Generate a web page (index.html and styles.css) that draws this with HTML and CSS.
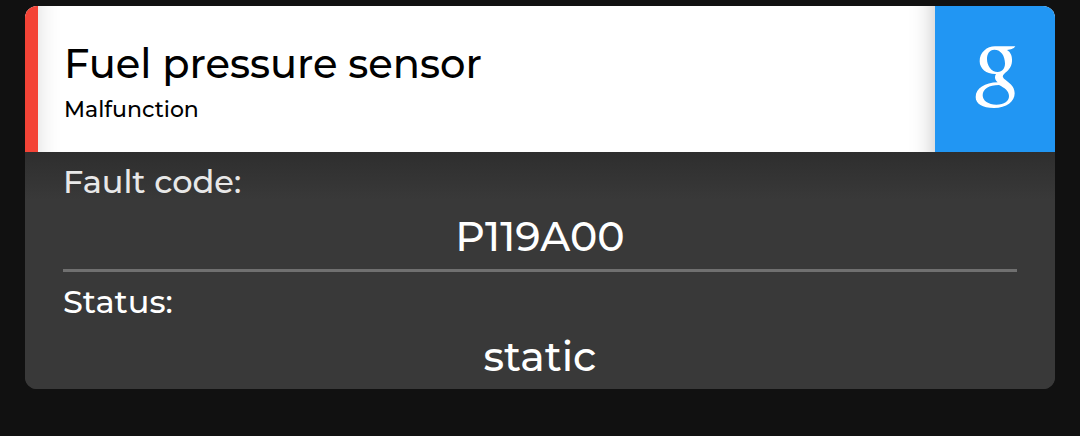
FILE: index.html
```html
<!DOCTYPE html>
<html lang="en">
<head>
<meta charset="utf-8">
<meta name="viewport" content="width=device-width, initial-scale=1">
<title>Fuel pressure sensor</title>
<link rel="stylesheet" href="styles.css">
</head>
<body>
<article class="card">
  <header class="card-header">
    <div class="heading">
      <h1 class="title">Fuel pressure sensor</h1>
      <p class="subtitle">Malfunction</p>
    </div>
    <button class="search" type="button" aria-label="Search with Google">
      <svg class="logo" viewBox="0 0 123 192" aria-hidden="true">
        <path fill="currentColor" fill-rule="evenodd" d="M60 4H121Q117 12 108 13L96 15C108 22 112 35 111 49C110 68 98 78 88 86C82 91 82 95 87 101C100 112 119 121 119 145C119 170 95 189 57 189C22 189 2 176 2 156C2 130 30 113 68 112C62 107 60 102 60 97C60 93 61 90 63 87C35 88 14 72 14 49C14 22 36 4 60 4ZM58 14C43 14 36 27 36 42C36 62 49 81 68 81C82 81 90 71 90 55C90 33 78 14 58 14ZM72 120C42 120 23 132 23 151C23 168 40 179 64 179C88 179 102 169 102 153C102 138 88 128 72 120Z"/>
      </svg>
    </button>
  </header>
  <dl class="details">
    <div class="field">
      <dt class="label">Fault code:</dt>
      <dd class="value">P119A00</dd>
    </div>
    <div class="field">
      <dt class="label">Status:</dt>
      <dd class="value">static</dd>
    </div>
  </dl>
</article>
</body>
</html>
```
FILE: styles.css
```css
* {
  box-sizing: border-box;
}

body {
  margin: 0;
  padding: 6px 25px;
  background: #111;
  font-family: Montserrat, Inter, sans-serif;
  font-weight: 500;
}

.card {
  overflow: hidden;
  border-radius: 12px;
  background: #393939;
  color: #fff;
}

.card-header {
  display: flex;
  border-left: 13px solid #f44336;
  background: #fff;
  color: #000;
}

.heading {
  flex: 1;
  padding: 30px 26px 24px;
  box-shadow:
    inset 28px 0 24px -28px rgba(0, 0, 0, 0.14),
    inset -28px 0 24px -28px rgba(0, 0, 0, 0.25);
}

.title {
  margin: 0;
  font-size: 40px;
  font-weight: 500;
  line-height: 56px;
}

.subtitle {
  margin: 0;
  font-size: 22px;
  line-height: 36px;
}

.search {
  display: flex;
  flex: 0 0 120px;
  justify-content: center;
  padding: 39px 0 0;
  border: 0;
  background: #2196f3;
  color: #fff;
  cursor: pointer;
}

.logo {
  width: 41px;
  height: 64px;
}

.details {
  margin: 0;
  padding: 0 38px;
  background: linear-gradient(#2e2e2e, #393939 48px);
}

.field {
  padding-top: 8px;
}

.field + .field {
  border-top: 3px solid #707070;
}

.label {
  font-size: 32px;
  line-height: 44px;
}

.field:first-child .label {
  color: #e8e8e8;
}

.value {
  margin: 0;
  font-size: 41px;
  line-height: 65px;
  text-align: center;
}
```
